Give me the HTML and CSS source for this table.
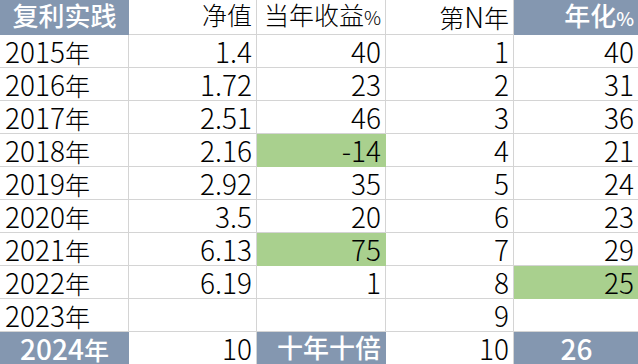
FILE: index.html
```html
<!DOCTYPE html>
<html lang="zh">
<head>
<meta charset="utf-8">
<link rel="stylesheet" href="styles.css">
</head>
<body>
<div class="sheet">
  <div class="c hd center"><span class="big">复利实践</span></div><div class="c r"><span class="k">净值</span></div><div class="c r"><span class="k">当年收益</span><span class="pct">%</span></div><div class="c r"><span class="k">第</span>N<span class="k">年</span></div><div class="c hd r last"><span class="big">年化</span><span class="pct">%</span></div>

  <div class="c">2015<span class="k">年</span></div><div class="c r">1.4</div><div class="c r">40</div><div class="c r">1</div><div class="c r last">40</div>
  <div class="c">2016<span class="k">年</span></div><div class="c r">1.72</div><div class="c r">23</div><div class="c r">2</div><div class="c r last">31</div>
  <div class="c">2017<span class="k">年</span></div><div class="c r">2.51</div><div class="c r">46</div><div class="c r">3</div><div class="c r last">36</div>
  <div class="c">2018<span class="k">年</span></div><div class="c r">2.16</div><div class="c r gr">-14</div><div class="c r">4</div><div class="c r last">21</div>
  <div class="c">2019<span class="k">年</span></div><div class="c r">2.92</div><div class="c r">35</div><div class="c r">5</div><div class="c r last">24</div>
  <div class="c">2020<span class="k">年</span></div><div class="c r">3.5</div><div class="c r">20</div><div class="c r">6</div><div class="c r last">23</div>
  <div class="c">2021<span class="k">年</span></div><div class="c r">6.13</div><div class="c r gr">75</div><div class="c r">7</div><div class="c r last">29</div>
  <div class="c">2022<span class="k">年</span></div><div class="c r">6.19</div><div class="c r">1</div><div class="c r">8</div><div class="c r gr last">25</div>
  <div class="c">2023<span class="k">年</span></div><div class="c r"></div><div class="c r"></div><div class="c r">9</div><div class="c r last"></div>
  <div class="c hd center">2024<span class="k">年</span></div><div class="c r">10</div><div class="c hd r"><span class="big">十年十倍</span></div><div class="c r">10</div><div class="c hd center last">26</div>
</div>
</body>
</html>
```

FILE: styles.css
```css
html, body {
  margin: 0;
  padding: 0;
  background: #ffffff;
}
body {
  width: 638px;
  height: 364px;
  overflow: hidden;
  font-family: "Noto Sans CJK SC", "Noto Sans", sans-serif;
  font-size: 28px;
  font-weight: 300;
  color: #000000;
}
.sheet {
  display: grid;
  grid-template-columns: 129px 128px 129px 128px 124px;
  grid-template-rows: 35px repeat(10, 33px);
}
.c {
  display: flex;
  align-items: baseline;
  justify-content: flex-start;
  padding: 2px 4px 0 5px;
  line-height: 1;
  white-space: nowrap;
  overflow: hidden;
  border-right: 1px solid #d4d4d4;
  border-bottom: 1px solid #d4d4d4;
  background: #ffffff;
}
.c.last {
  border-right: none;
}
.c.r {
  justify-content: flex-end;
}
.c.center {
  justify-content: center;
}
.k {
  font-size: 25px;
}
.big {
  font-size: 26px;
}
.hd {
  background: #8497b0;
  color: #ffffff;
  font-weight: 500;
  border-color: #8497b0;
}
.gr {
  background: #a9d08e;
  border-color: #a9d08e;
}
.pct {
  font-size: 19px;
}
```
